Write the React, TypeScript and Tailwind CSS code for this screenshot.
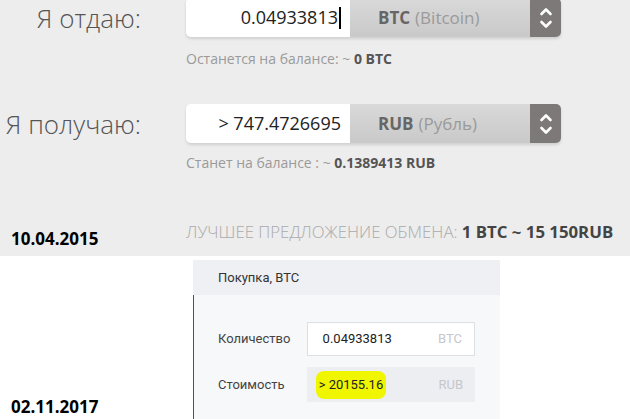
const openSans = { fontFamily: '"Open Sans", "Liberation Sans", sans-serif' }
const roboto = { fontFamily: 'Roboto, "Liberation Sans", sans-serif' }

function Chevrons() {
    return (
        <svg width="14" height="26" viewBox="0 0 14 26" fill="none" stroke="white" strokeWidth="2.6" strokeLinecap="round" strokeLinejoin="round">
            <path d="M2.5 9 L7 4.5 L11.5 9" />
            <path d="M2.5 17 L7 21.5 L11.5 17" />
        </svg>
    )
}

function CurrencyRow({ label, value, code, name, caret }: { label: string, value: string, code: string, name: string, caret?: boolean }) {
    return (
        <div className="flex items-center">
            <div className="w-[141px] text-right text-[26px] font-light text-[#555] leading-none">{label}</div>
            <div className="ml-[45px] flex h-[39px] rounded-[5px] shadow-[0_2px_3px_rgba(0,0,0,0.12)]">
                <div className="w-[164px] bg-white rounded-l-[5px] flex items-center justify-end pr-[9px] text-[18px] text-[#222]">
                    {value}
                    {caret && <span className="w-[2px] h-[22px] bg-black ml-[1px]"></span>}
                </div>
                <div className="w-[180px] bg-gradient-to-b from-[#d9d9d9] to-[#c9c9c9] flex items-center pl-[28px] text-[17px]">
                    <span className="font-bold text-[#666]">{code}</span>
                    <span className="ml-[5px] text-[#9a9a9a]">{name}</span>
                </div>
                <div className="w-[31px] bg-[#7e7979] rounded-r-[5px] flex items-center justify-center">
                    <Chevrons />
                </div>
            </div>
        </div>
    )
}

export default function App() {
    return (
        <div className="w-[630px] h-[419px] overflow-hidden bg-white flex flex-col">
            <div className="h-[256px] bg-[#ededed] flex flex-col" style={openSans}>
                <div className="-mt-[2px]">
                    <CurrencyRow label="Я отдаю:" value="0.04933813" code="BTC" name="(Bitcoin)" caret />
                </div>
                <p className="ml-[186px] mt-[12px] text-[14px] text-[#9a9a9a] leading-[20px]">
                    Останется на балансе: ~ <b className="text-[#555]">0 BTC</b>
                </p>
                <div className="mt-[35px]">
                    <CurrencyRow label="Я получаю:" value="> 747.4726695" code="RUB" name="(Рубль)" />
                </div>
                <p className="ml-[186px] mt-[10px] text-[14px] text-[#9a9a9a] leading-[20px]">
                    Станет на балансе : ~ <b className="text-[#555]">0.1389413 RUB</b>
                </p>
                <div className="mt-[48px] flex items-start">
                    <div className="w-[186px] pl-[11px] pt-[8px] text-[17px] font-bold text-black leading-[20px]">10.04.2015</div>
                    <div className="text-[16.8px] font-light text-[#aaa] leading-[22px]">
                        ЛУЧШЕЕ ПРЕДЛОЖЕНИЕ ОБМЕНА: <b className="font-bold text-[#444]">1 BTC ~ 15 150RUB</b>
                    </div>
                </div>
            </div>
            <div className="flex flex-1 pt-[4px]">
                <div className="w-[193px] flex flex-col justify-end pl-[11px] pb-[2px]" style={openSans}>
                    <div className="text-[17px] font-bold text-black leading-[20px]">02.11.2017</div>
                </div>
                <div className="w-[307px] flex flex-col" style={roboto}>
                    <div className="h-[35px] bg-[#eef0f3] flex items-center pl-[25px] text-[13px] text-[#333]">Покупка, BTC</div>
                    <div className="flex-1 bg-[#f7f8fa] border-l border-[#3f5670] pl-[24px] pr-[25px] pt-[27px] flex flex-col gap-[11px]">
                        <div className="flex items-center">
                            <div className="w-[89px] text-[13px] text-[#444]">Количество</div>
                            <div className="w-[169px] h-[34px] bg-white border border-[#dcdfe3] flex items-center justify-between pl-[15px] pr-[12px] text-[13px]">
                                <span className="text-[#222]">0.04933813</span>
                                <span className="text-[#c4c7cc]">BTC</span>
                            </div>
                        </div>
                        <div className="flex items-center">
                            <div className="w-[89px] text-[13px] text-[#444]">Стоимость</div>
                            <div className="w-[169px] h-[35px] bg-[#eceef1] flex items-center justify-between pl-[9px] pr-[12px] text-[13px]">
                                <span className="bg-[#f0f500] text-[#222] rounded-[8px] px-[3px] py-[5px] leading-[18px]">&gt; 20155.16</span>
                                <span className="text-[#c4c7cc]">RUB</span>
                            </div>
                        </div>
                    </div>
                </div>
            </div>
        </div>
    )
}
